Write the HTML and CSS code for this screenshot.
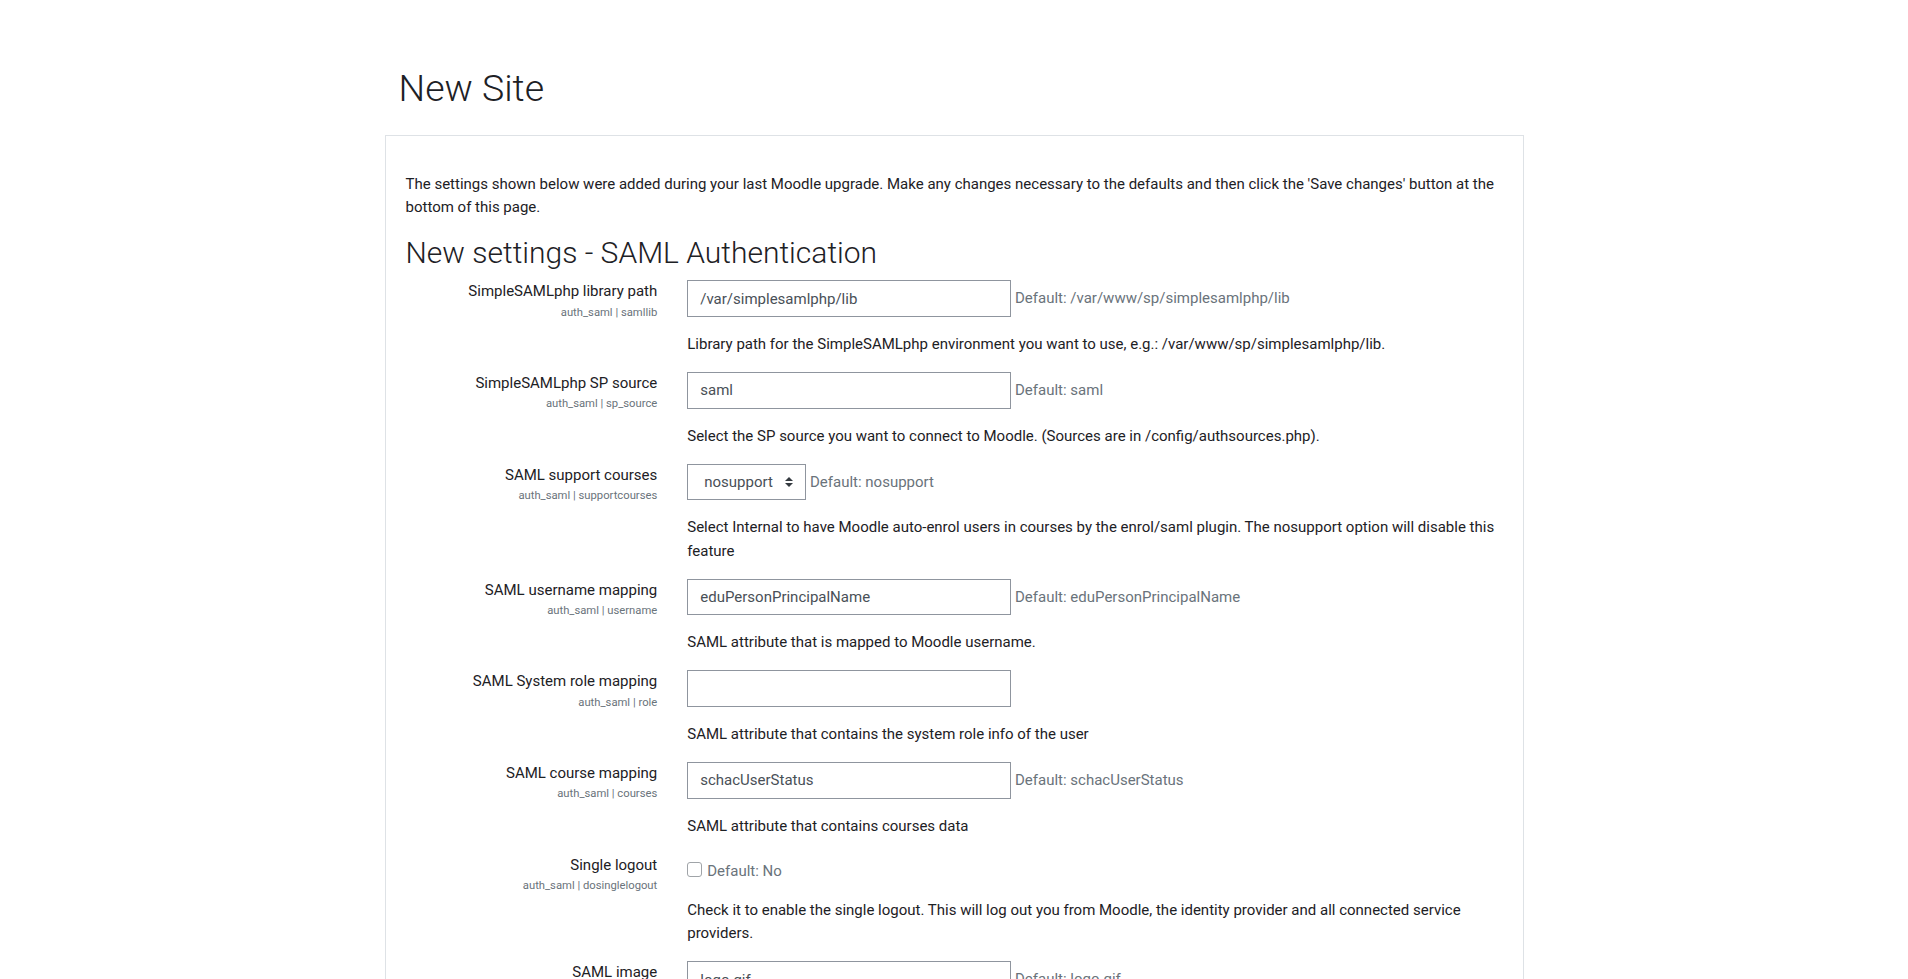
FILE: index.html
```html
<!DOCTYPE html>
<html lang="en">
<head>
<meta charset="utf-8">
<title>New Site</title>
<link rel="stylesheet" href="styles.css">
</head>
<body>
<div class="page">
  <header class="page-header">
    <h1 class="page-title">New Site</h1>
  </header>
  <div class="box">
    <p class="intro">The settings shown below were added during your last Moodle upgrade. Make any changes necessary to the defaults and then click the 'Save changes' button at the bottom of this page.</p>
    <h2 class="section-title">New settings - SAML Authentication</h2>

    <div class="form-item">
      <div class="form-label">
        <label for="s1">SimpleSAMLphp library path</label>
        <span class="shortname">auth_saml | samllib</span>
      </div>
      <div class="form-setting">
        <div class="line"><input id="s1" class="text-input" type="text" value="/var/simplesamlphp/lib"> <span class="default">Default: /var/www/sp/simplesamlphp/lib</span></div>
        <div class="desc"><p>Library path for the SimpleSAMLphp environment you want to use, e.g.: /var/www/sp/simplesamlphp/lib.</p></div>
      </div>
    </div>

    <div class="form-item">
      <div class="form-label">
        <label for="s2">SimpleSAMLphp SP source</label>
        <span class="shortname">auth_saml | sp_source</span>
      </div>
      <div class="form-setting">
        <div class="line"><input id="s2" class="text-input" type="text" value="saml"> <span class="default">Default: saml</span></div>
        <div class="desc"><p>Select the SP source you want to connect to Moodle. (Sources are in /config/authsources.php).</p></div>
      </div>
    </div>

    <div class="form-item">
      <div class="form-label">
        <label for="s3">SAML support courses</label>
        <span class="shortname">auth_saml | supportcourses</span>
      </div>
      <div class="form-setting">
        <div class="line"><select id="s3" class="select"><option>nosupport</option><option>internal</option></select> <span class="default">Default: nosupport</span></div>
        <div class="desc"><p>Select Internal to have Moodle auto-enrol users in courses by the enrol/saml plugin. The nosupport option will disable this feature</p></div>
      </div>
    </div>

    <div class="form-item">
      <div class="form-label">
        <label for="s4">SAML username mapping</label>
        <span class="shortname">auth_saml | username</span>
      </div>
      <div class="form-setting">
        <div class="line"><input id="s4" class="text-input" type="text" value="eduPersonPrincipalName"> <span class="default">Default: eduPersonPrincipalName</span></div>
        <div class="desc"><p>SAML attribute that is mapped to Moodle username.</p></div>
      </div>
    </div>

    <div class="form-item">
      <div class="form-label">
        <label for="s5">SAML System role mapping</label>
        <span class="shortname">auth_saml | role</span>
      </div>
      <div class="form-setting">
        <div class="line"><input id="s5" class="text-input" type="text" value=""></div>
        <div class="desc"><p>SAML attribute that contains the system role info of the user</p></div>
      </div>
    </div>

    <div class="form-item">
      <div class="form-label">
        <label for="s6">SAML course mapping</label>
        <span class="shortname">auth_saml | courses</span>
      </div>
      <div class="form-setting">
        <div class="line"><input id="s6" class="text-input" type="text" value="schacUserStatus"> <span class="default">Default: schacUserStatus</span></div>
        <div class="desc"><p>SAML attribute that contains courses data</p></div>
      </div>
    </div>

    <div class="form-item">
      <div class="form-label">
        <label for="s7">Single logout</label>
        <span class="shortname">auth_saml | dosinglelogout</span>
      </div>
      <div class="form-setting">
        <div class="line checkbox-line"><input id="s7" class="checkbox" type="checkbox"><span class="default">Default: No</span></div>
        <div class="desc"><p>Check it to enable the single logout. This will log out you from Moodle, the identity provider and all connected service providers.</p></div>
      </div>
    </div>

    <div class="form-item">
      <div class="form-label">
        <label for="s8">SAML image</label>
        <span class="shortname">auth_saml | logo_path</span>
      </div>
      <div class="form-setting">
        <div class="line"><input id="s8" class="text-input" type="text" value="logo.gif"> <span class="default">Default: logo.gif</span></div>
        <div class="desc"><p>Image shown on the login page for the SAML authentication link.</p></div>
      </div>
    </div>
  </div>
</div>
</body>
</html>
```
FILE: styles.css
```css
* {
  box-sizing: border-box;
}

body {
  margin: 0;
  font-family: Roboto, "Noto Sans", "Liberation Sans", sans-serif;
  font-size: 15px;
  line-height: 23.2px;
  color: #1d2125;
  background: #fff;
}

.page {
  width: 1139px;
  margin: 0 auto;
  padding-top: 66px;
}

.page-title {
  margin: 0 0 24px;
  padding-left: 14px;
  font-size: 37.5px;
  font-weight: 300;
  line-height: 1.2;
}

.box {
  border: 1px solid #dee2e6;
  padding: 37px 20px 20px;
}

.intro {
  margin: 0 0 16px;
}

.section-title {
  margin: 0 0 9px;
  font-size: 30px;
  font-weight: 300;
  line-height: 1.2;
}

.form-item {
  display: grid;
  grid-template-columns: 251.75px 1fr;
  column-gap: 30px;
}

.form-label {
  text-align: right;
}

.form-label label {
  display: block;
}

.shortname {
  display: block;
  font-size: 11.25px;
  line-height: 18px;
  color: #6a737b;
}

.text-input {
  width: 324px;
  height: 36.5px;
  margin: 0;
  padding: 6px 12px;
  border: 1px solid #8f959e;
  border-radius: 0;
  background: #fff;
  font: inherit;
  color: #495057;
}

.select {
  -webkit-appearance: none;
  appearance: none;
  height: 36.5px;
  margin: 0;
  padding: 6px 32px 6px 16px;
  border: 1px solid #8f959e;
  border-radius: 0;
  font: inherit;
  color: #495057;
  background: #fff url("data:image/svg+xml,%3csvg xmlns='http://www.w3.org/2000/svg' width='4' height='5' viewBox='0 0 4 5'%3e%3cpath fill='%23343a40' d='M2 0L0 2h4zm0 5L0 3h4z'/%3e%3c/svg%3e") no-repeat right 12px center / 8px 10px;
}

.default {
  color: #6a737b;
}

.checkbox-line {
  padding-top: 6px;
}

.checkbox {
  -webkit-appearance: none;
  appearance: none;
  width: 15px;
  height: 15px;
  margin: 0 5px 0 0;
  border: 1px solid #a0a4a8;
  border-radius: 3px;
  background: #fff;
  vertical-align: -1px;
}

.desc {
  margin-top: 16px;
}

.desc p {
  margin: 0 0 16px;
}
```
